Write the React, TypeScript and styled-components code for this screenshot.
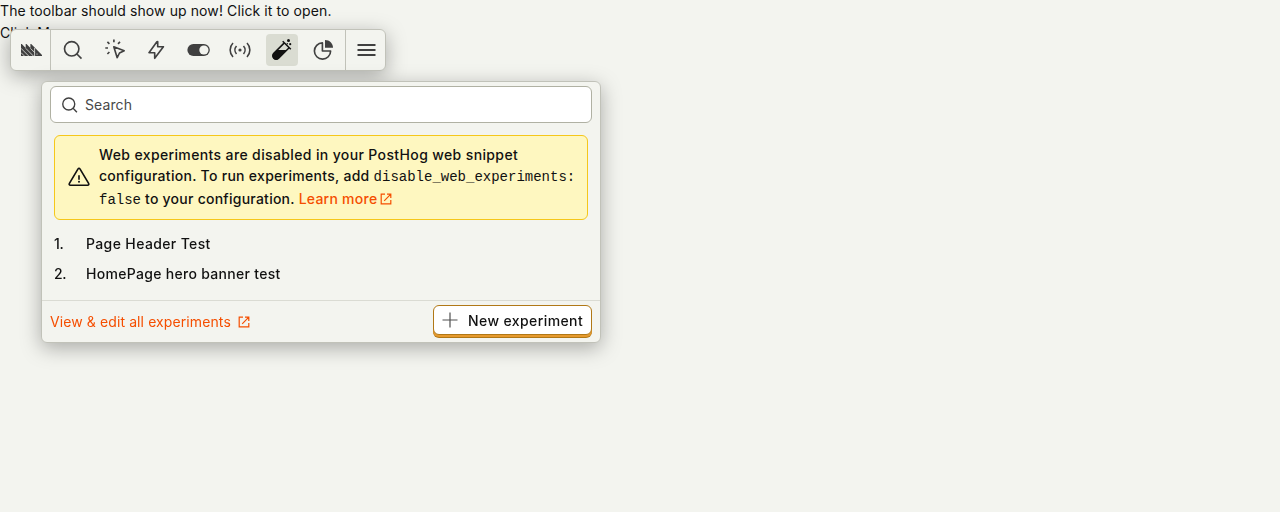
import React from 'react';
import styled, { createGlobalStyle, css } from 'styled-components';

const GlobalStyle = createGlobalStyle`
  *, *::before, *::after { box-sizing: border-box; }
  body {
    margin: 0;
    background: #f3f4ef;
    color: #111;
    font-family: Inter, 'Liberation Sans', sans-serif;
    font-size: 14px;
    line-height: 22px;
    letter-spacing: 0.1px;
  }
`;

const Page = styled.main`
  position: relative;
  min-height: 512px;
`;

const floating = css`
  position: absolute;
  display: flex;
  background: #f3f4ef;
  border: 1px solid #c1c2b9;
  border-radius: 6px;
  filter: drop-shadow(0 5px 10px rgba(0, 0, 0, 0.3));
`;

const Toolbar = styled.nav`
  ${floating}
  left: 10px;
  top: 29px;
  height: 42px;
`;

const ToolbarSection = styled.div<{ $divider?: boolean }>`
  display: flex;
  border-right: ${(p) => (p.$divider ? '1px solid #c1c2b9' : '0')};
`;

const ToolbarButton = styled.button<{ $width?: number; $active?: boolean }>`
  display: flex;
  align-items: center;
  justify-content: center;
  width: ${(p) => p.$width ?? 42}px;
  height: 40px;
  padding: 0;
  border: 0;
  background: none;
  color: ${(p) => (p.$active ? '#111' : '#404040')};

  & > span {
    display: flex;
    align-items: center;
    justify-content: center;
    width: 32px;
    height: 32px;
    border-radius: 4px;
    background: ${(p) => (p.$active ? '#dadcd2' : 'transparent')};
  }
`;

const Panel = styled.section`
  ${floating}
  left: 41px;
  top: 81px;
  width: 560px;
  height: 262px;
  flex-direction: column;
`;

const SearchField = styled.label`
  display: flex;
  align-items: center;
  gap: 6px;
  height: 37px;
  flex: none;
  margin: 4px 8px 12px;
  padding: 0 8px;
  border: 1px solid #b0b1a3;
  border-radius: 6px;
  background: #fff;
  color: #404040;
`;

const SearchInput = styled.input`
  flex: 1;
  padding: 0;
  border: 0;
  outline: 0;
  background: none;
  font: inherit;
  letter-spacing: inherit;
  color: inherit;
  &::placeholder { color: #484848; opacity: 1; }
`;

const Banner = styled.div`
  display: flex;
  align-items: center;
  flex: none;
  height: 85px;
  margin: 0 12px;
  padding: 0 12px 2px;
  gap: 8px;
  border: 1px solid #f5c71a;
  border-radius: 6px;
  background: #fef7c0;
  font-weight: 500;

  & > svg { flex: none; }
`;

const BannerLine = styled.div<{ $height: number; $tracking: number }>`
  height: ${(p) => p.$height}px;
  line-height: ${(p) => p.$height}px;
  letter-spacing: ${(p) => p.$tracking}px;
  white-space: nowrap;
`;

const Code = styled.code`
  font-family: 'Liberation Mono', monospace;
  font-size: 14px;
  font-weight: 400;
  letter-spacing: 0;
`;

const Link = styled.a<{ $gap?: number; $drop?: number }>`
  display: inline-flex;
  align-items: center;
  gap: ${(p) => p.$gap ?? 2}px;
  color: #f54e00;
  text-decoration: none;

  & > svg { margin-top: ${(p) => p.$drop ?? 0}px; }
`;

const ExperimentList = styled.ol`
  flex: 1;
  margin: 0;
  padding: 9px 12px 0;
  list-style: none;
`;

const Experiment = styled.li<{ $tracking: number }>`
  display: grid;
  grid-template-columns: 32px 1fr;
  align-items: center;
  height: 30px;
  font-weight: 500;
  letter-spacing: ${(p) => p.$tracking}px;
`;

const Order = styled.span`
  letter-spacing: -0.4px;
`;

const Footer = styled.footer`
  display: flex;
  align-items: flex-start;
  justify-content: space-between;
  height: 42px;
  flex: none;
  padding: 4px 8px 0;
  border-top: 1px solid #dadbd3;

  & > a { height: 33px; }
`;

const NewButton = styled.button`
  display: flex;
  align-items: center;
  gap: 6px;
  width: 159px;
  height: 30px;
  padding: 0 0 0 4px;
  border: 1px solid #b17816;
  border-radius: 6px;
  background: #fff;
  box-shadow: 0 2px 0 #e69a2e, 0 3px 0 #b17816;
  font: 500 14px/22px Inter, sans-serif;
  letter-spacing: 0.4px;
  color: #111;
  white-space: nowrap;
  & > svg { color: #505050; flex: none; }
  & > span { padding-top: 2px; }
`;

type IconProps = { size?: number; stroke?: number; children: React.ReactNode };
const Icon = ({ size = 24, stroke = 1.65, children }: IconProps) => (
  <svg width={size} height={size} viewBox="0 0 24 24" fill="none" stroke="currentColor" strokeWidth={stroke}>
    {children}
  </svg>
);

const LogoSvg = styled.svg`
  margin-left: 2px;
`;

const LogoIcon = () => (
  <LogoSvg width="21" height="12" viewBox="0 0 21 12" fill="none">
    <path d="M0 0h.8l3.9 3.9V0h.8l3.9 3.9V0h.8L21 11v1H0z" fill="currentColor" />
    <path d="M0 4.3 7.7 12M0 8.6 3.4 12M4.7 4.3 12.4 12M9.4 4.3 13.6 8.5M13.6 4v8" stroke="#f3f4ef" strokeWidth=".75" />
    <circle cx="16" cy="10" r=".6" fill="#f3f4ef" />
  </LogoSvg>
);

const SearchIcon = ({ size = 24 }: { size?: number }) => (
  <Icon size={size}><circle cx="11.7" cy="10.8" r="7.2" /><path d="m16.9 16 4.6 4.6" /></Icon>
);

const HeatmapIcon = () => (
  <Icon>
    <path d="m11.8 8.8 10.4 3.9-4.7 2.3-2.3 4.7z" strokeLinejoin="round" />
    <path d="M11.9 1.5v2.8M3.3 10H6M5.4 3.8l2 2M18 3.8l-2 2M7.4 14l-2 2" />
  </Icon>
);

const BoltIcon = () => (
  <Icon><path d="M12.9 3.7 5 14.7h5.7v5.6l8.7-11.6h-5.7v-5z" strokeLinejoin="round" /></Icon>
);

const ToggleIcon = () => (
  <Icon>
    <rect x="1.4" y="6" width="22.4" height="12" rx="6" fill="currentColor" stroke="none" />
    <circle cx="17.9" cy="12" r="4.6" fill="#f3f4ef" stroke="none" />
  </Icon>
);

const LiveIcon = () => (
  <Icon stroke={1.6}>
    <circle cx="12" cy="12" r="1.6" fill="currentColor" stroke="none" />
    <path d="M8.5 8a6 6 0 0 0 0 8M15.5 8a6 6 0 0 1 0 8M5 5a10 10 0 0 0 0 14M19 5a10 10 0 0 1 0 14" />
  </Icon>
);

const TubeIcon = () => (
  <Icon stroke={1.5}>
    <path d="m12.7 3.2 8.1 8.1M14.3 4.9 3.8 15.4a3.3 3.3 0 0 0 4.8 4.8L19.1 9.7" />
    <path d="M7.2 12h9.8L8.6 20.4a3.5 3.5 0 0 1-5-5z" fill="currentColor" stroke="none" />
    <circle cx="18.5" cy="2.5" r="1.5" fill="currentColor" stroke="none" />
    <circle cx="20.2" cy="6.2" r="1.1" fill="currentColor" stroke="none" />
    <circle cx="17.3" cy="5.8" r=".7" fill="currentColor" stroke="none" />
  </Icon>
);

const PieIcon = () => (
  <Icon>
    <path d="M10.4 4.9a8.1 8.1 0 1 0 8.2 8.1h-8.2z" strokeLinejoin="round" />
    <path d="M13 2c4.6 0 8 3.4 8 7.8h-8z" fill="currentColor" stroke="none" />
  </Icon>
);

const MenuIcon = () => (
  <Icon><path d="M3.5 7h18M3.5 12h18M3.5 17h18" strokeWidth="2" /></Icon>
);

const WarningIcon = () => (
  <Icon>
    <path d="M10.9 4.1 2.4 18.3q-.8 1.7 1.1 1.9h17q1.9-.2 1.1-1.9L13.1 4.1q-1.1-1.7-2.2 0z" strokeLinejoin="round" />
    <path d="M12 10.3v4.5" />
    <circle cx="12" cy="16.8" r="1" fill="currentColor" stroke="none" />
  </Icon>
);

const ExternalIcon = () => (
  <svg width="14" height="14" viewBox="0 0 14 14" fill="none" stroke="currentColor" strokeWidth="1.2">
    <path d="M6 2.2H2.2v9.6h9.6V8M8 2.2h3.8V6M11.8 2.2 5.2 8.8" />
  </svg>
);

const tools = [
  { name: 'Inspect', icon: <SearchIcon /> },
  { name: 'Heatmap', icon: <HeatmapIcon /> },
  { name: 'Actions', icon: <BoltIcon /> },
  { name: 'Feature flags', icon: <ToggleIcon /> },
  { name: 'Events', icon: <LiveIcon /> },
  { name: 'Experiments', icon: <TubeIcon />, active: true },
  { name: 'Web vitals', icon: <PieIcon /> },
];

const experiments = [
  { name: 'Page Header Test', tracking: 0.37 },
  { name: 'HomePage hero banner test', tracking: 0.3 },
];

export default function App() {
  return (
    <Page>
      <GlobalStyle />
      <div>The toolbar should show up now! Click it to open.</div>
      <div>Click Me</div>
      <Toolbar>
        <ToolbarSection $divider>
          <ToolbarButton $width={39} aria-label="Home"><span><LogoIcon /></span></ToolbarButton>
        </ToolbarSection>
        <ToolbarSection $divider>
          {tools.map((t) => (
            <ToolbarButton key={t.name} aria-label={t.name} $active={t.active}><span>{t.icon}</span></ToolbarButton>
          ))}
        </ToolbarSection>
        <ToolbarSection>
          <ToolbarButton $width={39} aria-label="Menu"><span><MenuIcon /></span></ToolbarButton>
        </ToolbarSection>
      </Toolbar>
      <Panel>
        <SearchField>
          <SearchIcon size={20} />
          <SearchInput placeholder="Search" />
        </SearchField>
        <Banner>
          <WarningIcon />
          <div>
            <BannerLine $height={21} $tracking={0.37}>Web experiments are disabled in your PostHog web snippet</BannerLine>
            <BannerLine $height={22} $tracking={0.29}>configuration. To run experiments, add <Code>disable_web_experiments:</Code></BannerLine>
            <BannerLine $height={23} $tracking={0.25}><Code>false</Code> to your configuration. <Link href="#" $drop={2}>Learn more<ExternalIcon /></Link></BannerLine>
          </div>
        </Banner>
        <ExperimentList>
          {experiments.map((e, i) => (
            <Experiment key={e.name} $tracking={e.tracking}><Order>{i + 1}.</Order><span>{e.name}</span></Experiment>
          ))}
        </ExperimentList>
        <Footer>
          <Link href="#" $gap={6}>View &amp; edit all experiments<ExternalIcon /></Link>
          <NewButton><Icon><path d="M12 4.5v15M4.5 12h15" strokeWidth="1.2" /></Icon><span>New experiment</span></NewButton>
        </Footer>
      </Panel>
    </Page>
  );
}
